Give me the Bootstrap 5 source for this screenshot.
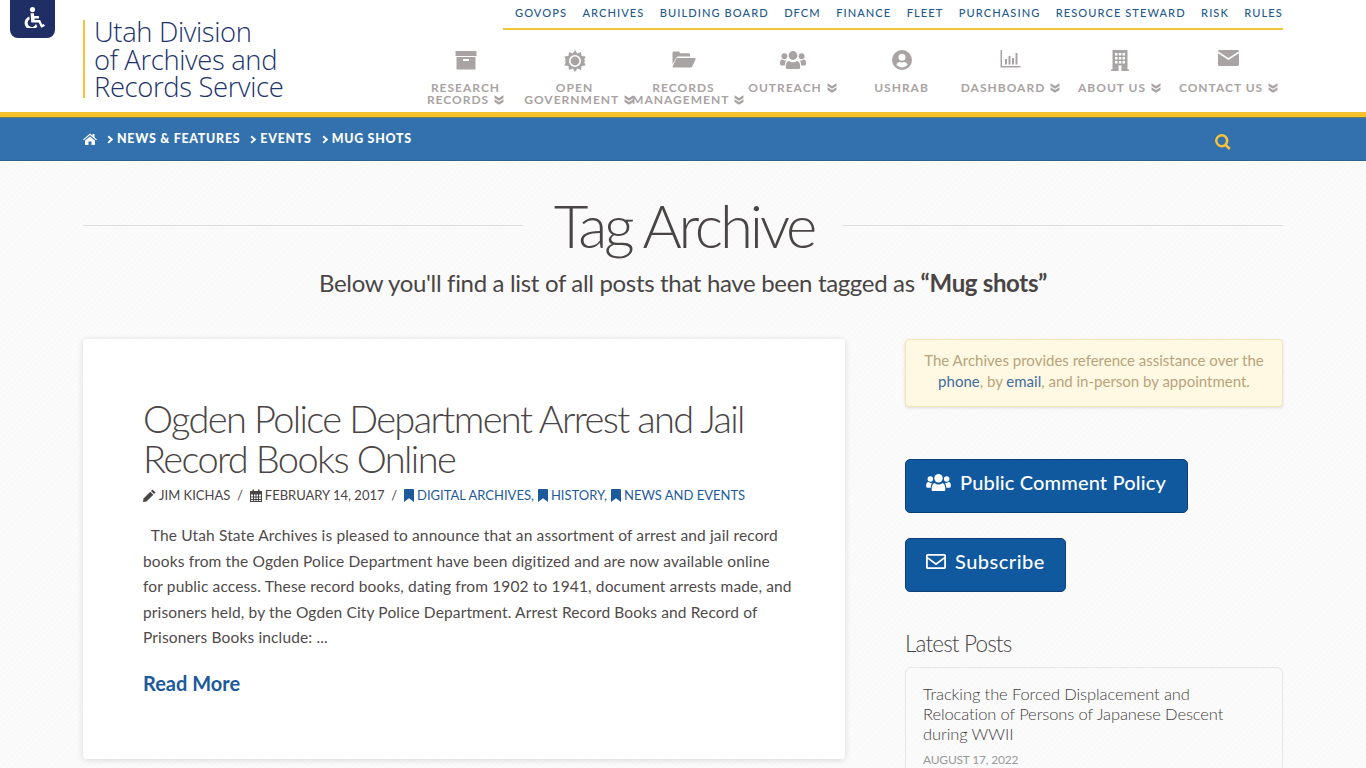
<!DOCTYPE html>
<html lang="en">
  <head>
    <meta charset="utf-8" />
    <title>Tag Archive - Utah Division of Archives and Records Service</title>
    <link
      rel="stylesheet"
      href="https://cdn.jsdelivr.net/npm/bootstrap@5.3.0/dist/css/bootstrap.min.css"
    />
    <style>
      html, body { overflow: hidden; height: 768px; }
      body {
        font-family: "Lato", "Liberation Sans", sans-serif;
        color: #4a4545;
        background-color: #fafafa;
        background-image: repeating-linear-gradient(135deg, #fbfbfb 0 2px, #f9f9f9 2px 4px);
      }
      .page-wrap { width: 1200px; margin: 0 auto; }
      .ico { fill: currentColor; display: inline-block; flex: none; }

      /* header */
      .site-head { height: 112px; background: #fff; position: relative; }
      .access-tab {
        position: absolute; left: 10px; top: 0; width: 45px; height: 38px; padding: 0 0 4px 3px;
        background: #1f2f66; color: #fff; border-radius: 0 0 8px 8px;
      }
      .logo-box {
        width: 328px; height: 78px; margin-top: 20px; padding-left: 10px;
        border-left: 2px solid #f5c33b; color: #22336c;
        font-family: "Open Sans", sans-serif; font-weight: 300;
        font-size: 27.4px; line-height: 27.5px; letter-spacing: -.35px;
      }
      .logo-box div { margin-top: -2px; margin-left: -1px; }
      .top-links {
        width: 780px; height: 30px; margin-left: auto; padding: 5px 0 0 12px;
        border-bottom: 2px solid #f5c33b;
        font-size: 11.1px; line-height: 15px; font-weight: 500; letter-spacing: 1.05px;
      }
      .top-links a { color: #1f5a8e; text-decoration: none; }
      .main-menu { width: 872px; margin-left: auto; margin-top: 20px; }
      .menu-item {
        width: 109px; color: #a9a3a3; text-decoration: none;
        font-size: 12px; line-height: 12px; font-weight: 700; letter-spacing: 1px;
        white-space: nowrap; text-align: center;
      }
      .menu-ico { height: 22px; margin-bottom: 10px; }
      .dbl { margin-left: 1px; vertical-align: -1px; }
      .wide-line { padding-left: 9px; }

      /* bars */
      .gold-bar { height: 6px; background: #f6c02c; border-bottom: 1px solid #6f7d55; }
      .crumb-bar { height: 43px; background: #3271ae; border-bottom: 1px solid #2c6190; color: #fff; }
      .crumbs { font-size: 12.4px; font-weight: 900; letter-spacing: .75px; line-height: 42px; padding-bottom: 3px; }
      .crumbs a { color: #fff; text-decoration: none; }
      .crumbs .sep { margin: 0 3px 0 10px; }
      .search-ico { color: #f5c33b; margin-left: auto; margin-right: 52px; margin-top: 3px; }

      /* title */
      .title-row { height: 66px; margin-top: 31px; }
      .title-row hr { flex: 1; margin: 0; border: 0; border-top: 1px solid #dcdcdc; opacity: 1; }
      .title-row h1 {
        margin: 0 29px 0 31px; font-weight: 300; font-size: 60px; line-height: 66px;
        letter-spacing: -3.2px; color: #4a4545;
      }
      .sub-line {
        margin: 7px 0 0; text-align: center; font-size: 24px; line-height: 36px;
        letter-spacing: -.33px; color: #4a4545;
      }
      .sub-line b { font-weight: 700; }

      /* main */
      .two-col { margin-top: 38px; gap: 60px; }
      .post-box {
        width: 762px; height: 420px; flex: none; padding: 59px 60px 60px; border: 0; border-radius: 4px;
        background: #fff; box-shadow: 0 1px 6px rgba(0, 0, 0, .14);
      }
      .post-box h2 {
        margin: 0; font-weight: 300; font-size: 38px; line-height: 40px;
        letter-spacing: -1.62px; color: #4a4545;
      }
      .post-meta { margin-top: 7px; font-size: 13px; line-height: 20px; color: #4a4545; }
      .post-meta a { color: #1c5a9c; text-decoration: none; }
      .post-meta .slash { margin: 0 3.5px; }
      .post-meta .meta-ico { margin-right: 3px; }
      .post-text { margin: 18px -10px 0 0; font-size: 15.5px; line-height: 25.5px; letter-spacing: .14px; color: #4f4a4a; }
      .read-more { display: block; margin-top: 17px; font-size: 20px; line-height: 30px; font-weight: 700; color: #1c5a9c; text-decoration: none; }

      .side-col { width: 378px; flex: none; }
      .hours-note {
        height: 68px; margin: 0; padding: 10px 15px; border: 1px solid #f5e5b8; border-radius: 4px;
        background: #fff8e2; color: #b8a47c; text-align: center;
        font-size: 15px; line-height: 21px; box-shadow: 0 1px 3px rgba(0, 0, 0, .12);
      }
      .hours-note a { color: #3f6d9e; text-decoration: none; }
      .side-btn {
        display: flex; align-items: center; height: 54px; padding: 0 20px 8px;
        background: #10599f; border: 1px solid #0e3f78; border-radius: 5px;
        color: #fff; font-size: 20px; font-weight: 500;
      }
      .side-btn:hover { background: #10599f; color: #fff; border-color: #0e3f78; }
      .btn-one { margin-top: 52px; width: 283px; gap: 9px; letter-spacing: .15px; }
      .btn-two { margin-top: 25px; width: 161px; gap: 9px; letter-spacing: .5px; }
      .side-head { margin: 37px 0 0; font-weight: 300; font-size: 22.5px; line-height: 30px; letter-spacing: -.85px; color: #4a4545; }
      .latest-box { margin-top: 8px; border: 1px solid #e6e6e6; border-radius: 6px; background: transparent; padding: 16px 17px; }
      .latest-box a { display: block; color: #453f3f; text-decoration: none; font-weight: 300; font-size: 16.5px; line-height: 20px; letter-spacing: -.1px; }
      .latest-date { margin-top: 8px; font-size: 12px; line-height: 16px; color: #999; letter-spacing: -.2px; }
    </style>
  </head>

  <body>
    <!-- icons used more than once -->
    <svg width="0" height="0" class="position-absolute">
      <symbol id="i-dbl" viewBox="0 0 10 10">
        <path d="M0.500 0.300 5 3 9.500 0.300V3.100L5 5.800 .5 3.100ZM.5 4.200 5 6.900 9.500 4.200V7L5 9.700 .5 7Z" />
      </symbol>
      <symbol id="i-chev" viewBox="0 0 8 10">
        <path d="M2 0.500 7.200 5 2 9.500 .6 8 3.800 5 .6 2Z" />
      </symbol>
      <symbol id="i-users" viewBox="0 0 26 20">
        <circle cx="13" cy="5.500" r="4.400" />
        <circle cx="4.400" cy="6.200" r="2.900" />
        <circle cx="21.600" cy="6.200" r="2.900" />
        <path d="M7.200 19c-.9 0-1.400-.6-1.400-1.500 0-3.800.9-6.600 3.400-6.600 1 .8 2.300 1.300 3.800 1.300s2.800-.5 3.800-1.300c2.500 0 3.400 2.800 3.400 6.600 0 .9-.5 1.500-1.400 1.500Z" />
        <path d="M0 13.500c0-2.500.7-3.900 2.400-3.900.6.5 1.300.8 2.100.8.700 0 1.300-.1 1.900-.5-.8 1.200-1.500 3-1.600 5.600H1.200C.5 15.500 0 14.700 0 13.500ZM26 13.500c0-2.500-.7-3.900-2.400-3.900-.6.5-1.300.8-2.100.8-.7 0-1.300-.1-1.900-.5.8 1.200 1.500 3 1.600 5.600h3.600c.7 0 1.200-.8 1.200-2Z" />
      </symbol>
      <symbol id="i-mark" viewBox="0 0 10 13">
        <path d="M0 1.200C0 .5.500 0 1.200 0h7.600c.7 0 1.200.5 1.200 1.200V13L5 9.300 0 13Z" />
      </symbol>
    </svg>

    <header class="site-head">
      <a class="access-tab d-flex align-items-center justify-content-center" href="#" aria-label="Accessibility">
        <svg class="ico" width="21" height="21" viewBox="0 0 21 21">
          <circle cx="8.500" cy="2.600" r="2.600" />
          <path d="M6.600 6.200h3.300l.3 2.900h4.700v2.400h-4.400l.2 1.500h5.400l2.200 4.700 1.600-.7 1 2.100-3.700 1.700-2.500-5.400H7.300Z" />
          <path d="M5.300 9.500l.3 2.700a4.200 4.200 0 1 0 6.300 4.500l1.400 2.700A6.800 6.800 0 1 1 5.300 9.500Z" />
        </svg>
      </a>
      <div class="page-wrap d-flex">
        <div class="logo-box flex-shrink-0">
          <div>Utah Division<br />of Archives and<br />Records Service</div>
        </div>
        <div class="flex-grow-1">
          <nav class="top-links d-flex justify-content-between">
            <a href="#">GOVOPS</a>
            <a href="#">ARCHIVES</a>
            <a href="#">BUILDING BOARD</a>
            <a href="#">DFCM</a>
            <a href="#">FINANCE</a>
            <a href="#">FLEET</a>
            <a href="#">PURCHASING</a>
            <a href="#">RESOURCE STEWARD</a>
            <a href="#">RISK</a>
            <a href="#">RULES</a>
          </nav>
          <nav class="main-menu d-flex">
            <a class="menu-item d-flex flex-column align-items-center" href="#">
              <span class="menu-ico">
                <svg class="ico" width="22" height="20" viewBox="0 0 22 20"><path d="M0.500 1h21v5H.5ZM1.500 7h19v11.500c0 .6-.4 1-1 1h-17c-.6 0-1-.4-1-1ZM8 9v2h6V9Z" fill-rule="evenodd" /></svg>
              </span>
              <span>RESEARCH<br />RECORDS <svg class="ico dbl" width="10" height="10"><use href="#i-dbl" /></svg></span>
            </a>
            <a class="menu-item d-flex flex-column align-items-center" href="#">
              <span class="menu-ico">
                <svg class="ico" width="22" height="22" viewBox="0 0 22 22"><path d="M11 0l2.300 3.400 3.700-1.500.6 4 4 .6-1.500 3.700L22 11l-1.900 .8 1.500 3.700-4 .6-.6 4-3.700-1.500L11 22l-2.300-3.400-3.700 1.500-.6-4-4-.6 1.500-3.700L0 11l1.900-.8L.4 6.500l4-.6.6-4 3.700 1.500ZM11 5a6 6 0 1 0 0 12 6 6 0 0 0 0-12Z" fill-rule="evenodd" /><circle cx="11" cy="11" r="4.400" /></svg>
              </span>
              <span>OPEN<br /><span class="wide-line">GOVERNMENT <svg class="ico dbl" width="10" height="10"><use href="#i-dbl" /></svg></span></span>
            </a>
            <a class="menu-item d-flex flex-column align-items-center" href="#">
              <span class="menu-ico">
                <svg class="ico" width="24" height="20" viewBox="0 0 24 20"><path d="M0.500 14V3c0-.8.5-1.500 1.300-1.500h4.500c.8 0 1.200.4 1.500 1.200l.3.600h8.600c.8 0 1.300.6 1.300 1.400v1.700H6.500c-1 0-1.800.5-2.200 1.300Z" /><path d="M5.400 8h17.300c.8 0 1.200.7.800 1.400l-3.400 7.300c-.3.500-.7.800-1.300.8H1.500c-.8 0-1.100-.7-.8-1.300l3.400-7.400C4.400 8.300 4.800 8 5.400 8Z" /></svg>
              </span>
              <span>RECORDS<br /><span class="wide-line">MANAGEMENT <svg class="ico dbl" width="10" height="10"><use href="#i-dbl" /></svg></span></span>
            </a>
            <a class="menu-item d-flex flex-column align-items-center" href="#">
              <span class="menu-ico">
                <svg class="ico" width="26" height="20"><use href="#i-users" /></svg>
              </span>
              <span>OUTREACH <svg class="ico dbl" width="10" height="10"><use href="#i-dbl" /></svg></span>
            </a>
            <a class="menu-item d-flex flex-column align-items-center" href="#">
              <span class="menu-ico">
                <svg class="ico" width="20" height="20" viewBox="0 0 20 20"><path d="M10 0a10 10 0 1 0 0 20 10 10 0 0 0 0-20Zm0 3.800a3.500 3.500 0 1 1 0 7 3.500 3.500 0 0 1 0-7Zm0 13.700a7.600 7.600 0 0 1-5.600-2.500c.4-1.700 1.800-2.900 3.600-2.900.6.300 1.300.5 2 .5s1.400-.2 2-.5c1.800 0 3.200 1.200 3.600 2.900a7.600 7.600 0 0 1-5.600 2.500Z" fill-rule="evenodd" /></svg>
              </span>
              <span>USHRAB</span>
            </a>
            <a class="menu-item d-flex flex-column align-items-center" href="#">
              <span class="menu-ico">
                <svg class="ico" width="21" height="18" viewBox="0 0 21 18"><path d="M0.500 0H2v16h18.500v1.500H.5ZM5 9h2v5.500H5ZM8.500 6h2v8.500h-2ZM12 8h2v6.500h-2ZM15.500 3h2v11.500h-2Z" /></svg>
              </span>
              <span>DASHBOARD <svg class="ico dbl" width="10" height="10"><use href="#i-dbl" /></svg></span>
            </a>
            <a class="menu-item d-flex flex-column align-items-center" href="#">
              <span class="menu-ico">
                <svg class="ico" width="18" height="21" viewBox="0 0 18 21"><path d="M1.500 0h15v19.500H18V21H0v-1.500h1.500ZM4 3v2.500h2.500V3Zm3.800 0v2.500h2.500V3Zm3.700 0v2.500H14V3ZM4 7v2.500h2.500V7Zm3.800 0v2.500h2.500V7Zm3.700 0v2.500H14V7ZM4 11v2.500h2.500V11Zm3.800 0v2.500h2.500V11Zm3.700 0v2.500H14V11ZM7.500 15.500V21h3v-5.500Z" fill-rule="evenodd" /></svg>
              </span>
              <span>ABOUT US <svg class="ico dbl" width="10" height="10"><use href="#i-dbl" /></svg></span>
            </a>
            <a class="menu-item d-flex flex-column align-items-center" href="#">
              <span class="menu-ico">
                <svg class="ico" width="21" height="16" viewBox="0 0 21 16"><path d="M1.500 0h18c.8 0 1.400.5 1.500 1.200L10.500 8 0 1.200C.1.500.7 0 1.500 0Z" /><path d="M0 3.200 10.500 10 21 3.200V14.500c0 .8-.7 1.500-1.500 1.500h-18C.7 16 0 15.300 0 14.500Z" /></svg>
              </span>
              <span>CONTACT US <svg class="ico dbl" width="10" height="10"><use href="#i-dbl" /></svg></span>
            </a>
          </nav>
        </div>
      </div>
    </header>

    <div class="gold-bar"></div>
    <div class="crumb-bar">
      <div class="page-wrap d-flex align-items-center">
        <nav class="crumbs d-flex align-items-center">
          <a href="#" class="d-flex" aria-label="Home">
            <svg class="ico" width="14" height="12" viewBox="0 0 14 12"><path d="M7 0.500 9.500 2.600V1h2v3.300L14 6.400l-.8.9L7 2.100.8 7.300 0 6.400ZM2 7.500 7 3.400l5 4.100V11.500c0 .3-.2.5-.5.500H8.500V8.500h-3V12H2.500c-.3 0-.5-.2-.5-.5Z" /></svg>
          </a>
          <svg class="ico sep" width="7" height="9"><use href="#i-chev" /></svg>
          <a href="#">NEWS &amp; FEATURES</a>
          <svg class="ico sep" width="7" height="9"><use href="#i-chev" /></svg>
          <a href="#">EVENTS</a>
          <svg class="ico sep" width="7" height="9"><use href="#i-chev" /></svg>
          <a href="#">MUG SHOTS</a>
        </nav>
        <a href="#" class="search-ico d-flex" aria-label="Search">
          <svg class="ico" width="16" height="16" viewBox="0 0 16 16"><path d="M6.700 0a6.700 6.700 0 0 1 5.400 10.600l3.500 3.500-1.800 1.800-3.500-3.500A6.700 6.700 0 1 1 6.700 0Zm0 2.500a4.200 4.200 0 1 0 0 8.400 4.200 4.200 0 0 0 0-8.400Z" fill-rule="evenodd" /></svg>
        </a>
      </div>
    </div>

    <main class="page-wrap">
      <div class="title-row d-flex align-items-center">
        <hr />
        <h1>Tag Archive</h1>
        <hr />
      </div>
      <p class="sub-line">Below you'll find a list of all posts that have been tagged as <b>“Mug shots”</b></p>

      <div class="two-col d-flex">
        <article class="card post-box">
          <h2>Ogden Police Department Arrest and Jail Record Books Online</h2>
          <div class="post-meta d-flex align-items-center">
            <svg class="ico meta-ico" width="13" height="13" viewBox="0 0 13 13"><path d="M9.500 0.500 12.500 3.500 11 5 8 2ZM7.300 2.700l3 3L3.500 12.500 0 13l.5-3.500Z" /></svg>
            <span>JIM KICHAS</span>
            <span class="slash">&nbsp;/&nbsp;</span>
            <svg class="ico meta-ico" width="12" height="13" viewBox="0 0 12 13"><path d="M0 2h2.500V0.500h1.500V2h4V.5h1.500V2H12v11H0Zm1 3.500v2h2v-2Zm3 0v2h1.500v-2Zm2.500 0v2H8v-2Zm2.500 0v2h2v-2ZM1 8.500v1.500h2V8.500Zm3 0v1.500h1.500V8.500Zm2.500 0v1.500H8V8.500Zm2.500 0v1.500h2V8.500ZM1 11v1h2v-1Zm3 0v1h1.500v-1Zm2.500 0v1H8v-1Zm2.500 0v1h2v-1Z" fill-rule="evenodd" /></svg>
            <span>FEBRUARY 14, 2017</span>
            <span class="slash">&nbsp;/&nbsp;</span>
            <a href="#" class="d-flex align-items-center"><svg class="ico meta-ico" width="10" height="13"><use href="#i-mark" /></svg>DIGITAL ARCHIVES,</a>
            <a href="#" class="d-flex align-items-center ms-1"><svg class="ico meta-ico" width="10" height="13"><use href="#i-mark" /></svg>HISTORY,</a>
            <a href="#" class="d-flex align-items-center ms-1"><svg class="ico meta-ico" width="10" height="13"><use href="#i-mark" /></svg>NEWS AND EVENTS</a>
          </div>
          <p class="post-text">&nbsp; The Utah State Archives is pleased to announce that an assortment of arrest and jail record<br />books from the Ogden Police Department have been digitized and are now available online<br />for public access. These record books, dating from 1902 to 1941, document arrests made, and<br />prisoners held, by the Ogden City Police Department. Arrest Record Books and Record of<br />Prisoners Books include: ...</p>
          <a href="#" class="read-more">Read More</a>
        </article>

        <aside class="side-col">
          <div class="alert hours-note" role="alert">
            The Archives provides reference assistance over the <a href="#">phone</a>, by <a href="#">email</a>, and in-person by appointment.
          </div>
          <a href="#" class="btn side-btn btn-one">
            <svg class="ico" width="25" height="19"><use href="#i-users" /></svg>
            Public Comment Policy
          </a>
          <a href="#" class="btn side-btn btn-two">
            <svg class="ico" width="20" height="15" viewBox="0 0 20 15"><path d="M1.800 0h16.400C19.200 0 20 .8 20 1.800v11.400c0 1-.8 1.800-1.800 1.800H1.800C.8 15 0 14.200 0 13.200V1.800C0 .8.800 0 1.800 0Zm0 1.700v1.200L10 9l8.200-6.100V1.700Zm0 3.300v8.300h16.400V5L10 11.200Z" fill-rule="evenodd" /></svg>
            Subscribe
          </a>
          <h3 class="side-head">Latest Posts</h3>
          <div class="card latest-box">
            <a href="#">Tracking the Forced Displacement and Relocation of Persons of Japanese Descent during WWII</a>
            <div class="latest-date">AUGUST 17, 2022</div>
          </div>
        </aside>
      </div>
    </main>

    <script src="https://cdn.jsdelivr.net/npm/bootstrap@5.3.0/dist/js/bootstrap.bundle.min.js"></script>
  </body>
</html>
